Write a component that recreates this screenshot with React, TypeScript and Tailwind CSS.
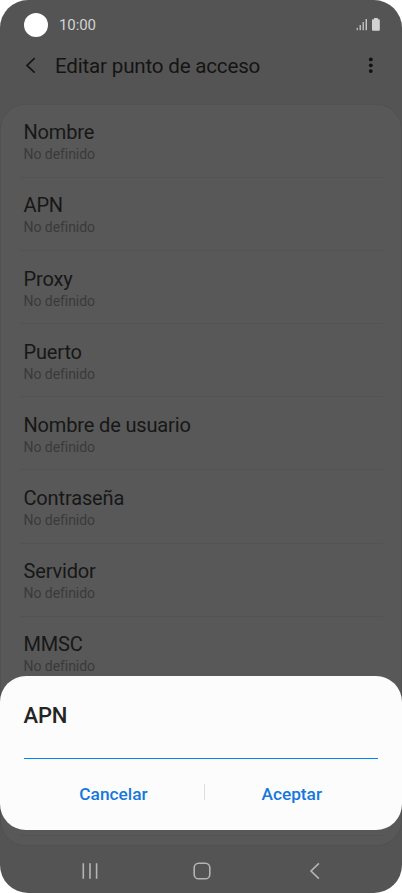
import React, { useState } from "react";

const fields = [
  "Nombre",
  "APN",
  "Proxy",
  "Puerto",
  "Nombre de usuario",
  "Contraseña",
  "Servidor",
  "MMSC",
];

const StatusBar: React.FC = () => (
  <div className="flex h-[49px] items-center pl-6 pr-[22px]">
    <span className="h-6 w-6 rounded-full bg-white" />
    <span className="ml-[11px] text-[15px] leading-5 tracking-[-0.1px] text-[#d2d2d2]">
      10:00
    </span>
    <svg
      className="ml-auto"
      width="24"
      height="13"
      viewBox="0 0 24 13"
      fill="#d2d2d2"
    >
      <rect x="0.7" y="9.8" width="1.1" height="2.4" />
      <rect x="3.6" y="7" width="1.2" height="5.2" />
      <rect x="6.6" y="4" width="1.2" height="8.2" />
      <rect x="9.6" y="1" width="1.3" height="11.2" />
      <path d="M18 0h3.8v1.2h1a1 1 0 0 1 1 1v9.6a1 1 0 0 1-1 1H17a1 1 0 0 1-1-1V2.2a1 1 0 0 1 1-1h1z" />
    </svg>
  </div>
);

const Header: React.FC = () => (
  <header className="flex h-[55px] pl-[25px] pr-[28px] pt-[3px]">
    <button type="button" aria-label="Atrás" className="mt-[5px] h-4 w-[11px]">
      <svg width="11" height="16" viewBox="0 0 11 16" fill="none">
        <path d="M9.7 1.2L2 8.4l7.7 7.2" stroke="#151515" strokeWidth="1.7" />
      </svg>
    </button>
    <h1 className="ml-[19px] text-[20.6px] leading-7 tracking-[-0.2px] text-[#141414]">
      Editar punto de acceso
    </h1>
    <button
      type="button"
      aria-label="Más opciones"
      className="ml-auto mt-[5px] h-4 w-[6px]"
    >
      <svg width="6" height="16" viewBox="0 0 6 16" fill="#101010">
        <circle cx="2.8" cy="2.4" r="1.9" />
        <circle cx="2.8" cy="8.3" r="1.9" />
        <circle cx="2.8" cy="14.1" r="1.9" />
      </svg>
    </button>
  </header>
);

const NavBar: React.FC = () => (
  <nav className="flex h-[47px] items-center pl-[82px] pr-[81px] pt-[3px]">
    <svg width="16" height="18" viewBox="0 0 16 18" stroke="#b4b4b4">
      <path d="M1.3 1.2v15.6M8 1.2v15.6M14.6 1.2v15.6" strokeWidth="1.6" />
    </svg>
    <svg className="ml-[95px]" width="18" height="18" viewBox="0 0 18 18">
      <rect
        x="1.2"
        y="1.2"
        width="15.6"
        height="15.6"
        rx="4.4"
        fill="none"
        stroke="#b4b4b4"
        strokeWidth="1.6"
      />
    </svg>
    <svg className="ml-auto" width="12" height="18" viewBox="0 0 12 18">
      <path
        d="M9.9 1.4L2 9l7.9 7.6"
        fill="none"
        stroke="#b4b4b4"
        strokeWidth="1.6"
      />
    </svg>
  </nav>
);

const App: React.FC = () => {
  const [value, setValue] = useState("");

  return (
    <div className="relative flex h-[893px] w-[402px] flex-col overflow-hidden rounded-[28px] bg-[#545454] font-['Roboto',sans-serif]">
      <StatusBar />
      <Header />

      <ul className="h-[742px] overflow-hidden rounded-[25px] border border-[#515151] bg-[#585858] pl-[19px] pr-[18px]">
        {fields.map((field) => (
          <li
            key={field}
            className="h-[73.1px] border-b border-[#535353] pl-[3.5px] pt-[13.4px]"
          >
            <p className="text-[20px] leading-7 tracking-[-0.15px] text-[#171717]">
              {field}
            </p>
            <p className="text-[14px] leading-[17px] tracking-[-0.05px] text-[#3a3a3a]">
              No definido
            </p>
          </li>
        ))}
        {/* rows covered by the dialog */}
        <li className="h-[146px] border-b border-[#535353]" />
      </ul>

      <NavBar />

      <div
        role="dialog"
        className="absolute left-0 top-[676px] flex h-[154px] w-[401.5px] flex-col rounded-[26px] bg-[#fcfcfc] px-[23.5px]"
      >
        <h2 className="pt-[26px] text-[22px] font-medium leading-7 tracking-[-0.2px] text-[#252525]">
          APN
        </h2>
        <input
          type="text"
          aria-label="APN"
          value={value}
          onChange={(e) => setValue(e.target.value)}
          className="h-[29px] w-full border-b border-[#0381fe] outline-none"
        />
        <div className="flex pt-[23px] text-[17.3px] font-medium leading-6 text-[#1577dc]">
          <button type="button" className="w-[180px]">
            Cancelar
          </button>
          <span className="mt-[2px] h-4 w-px bg-[#dedede]" />
          <button type="button" className="flex-1 pl-px">
            Aceptar
          </button>
        </div>
      </div>
    </div>
  );
};

export default App;
